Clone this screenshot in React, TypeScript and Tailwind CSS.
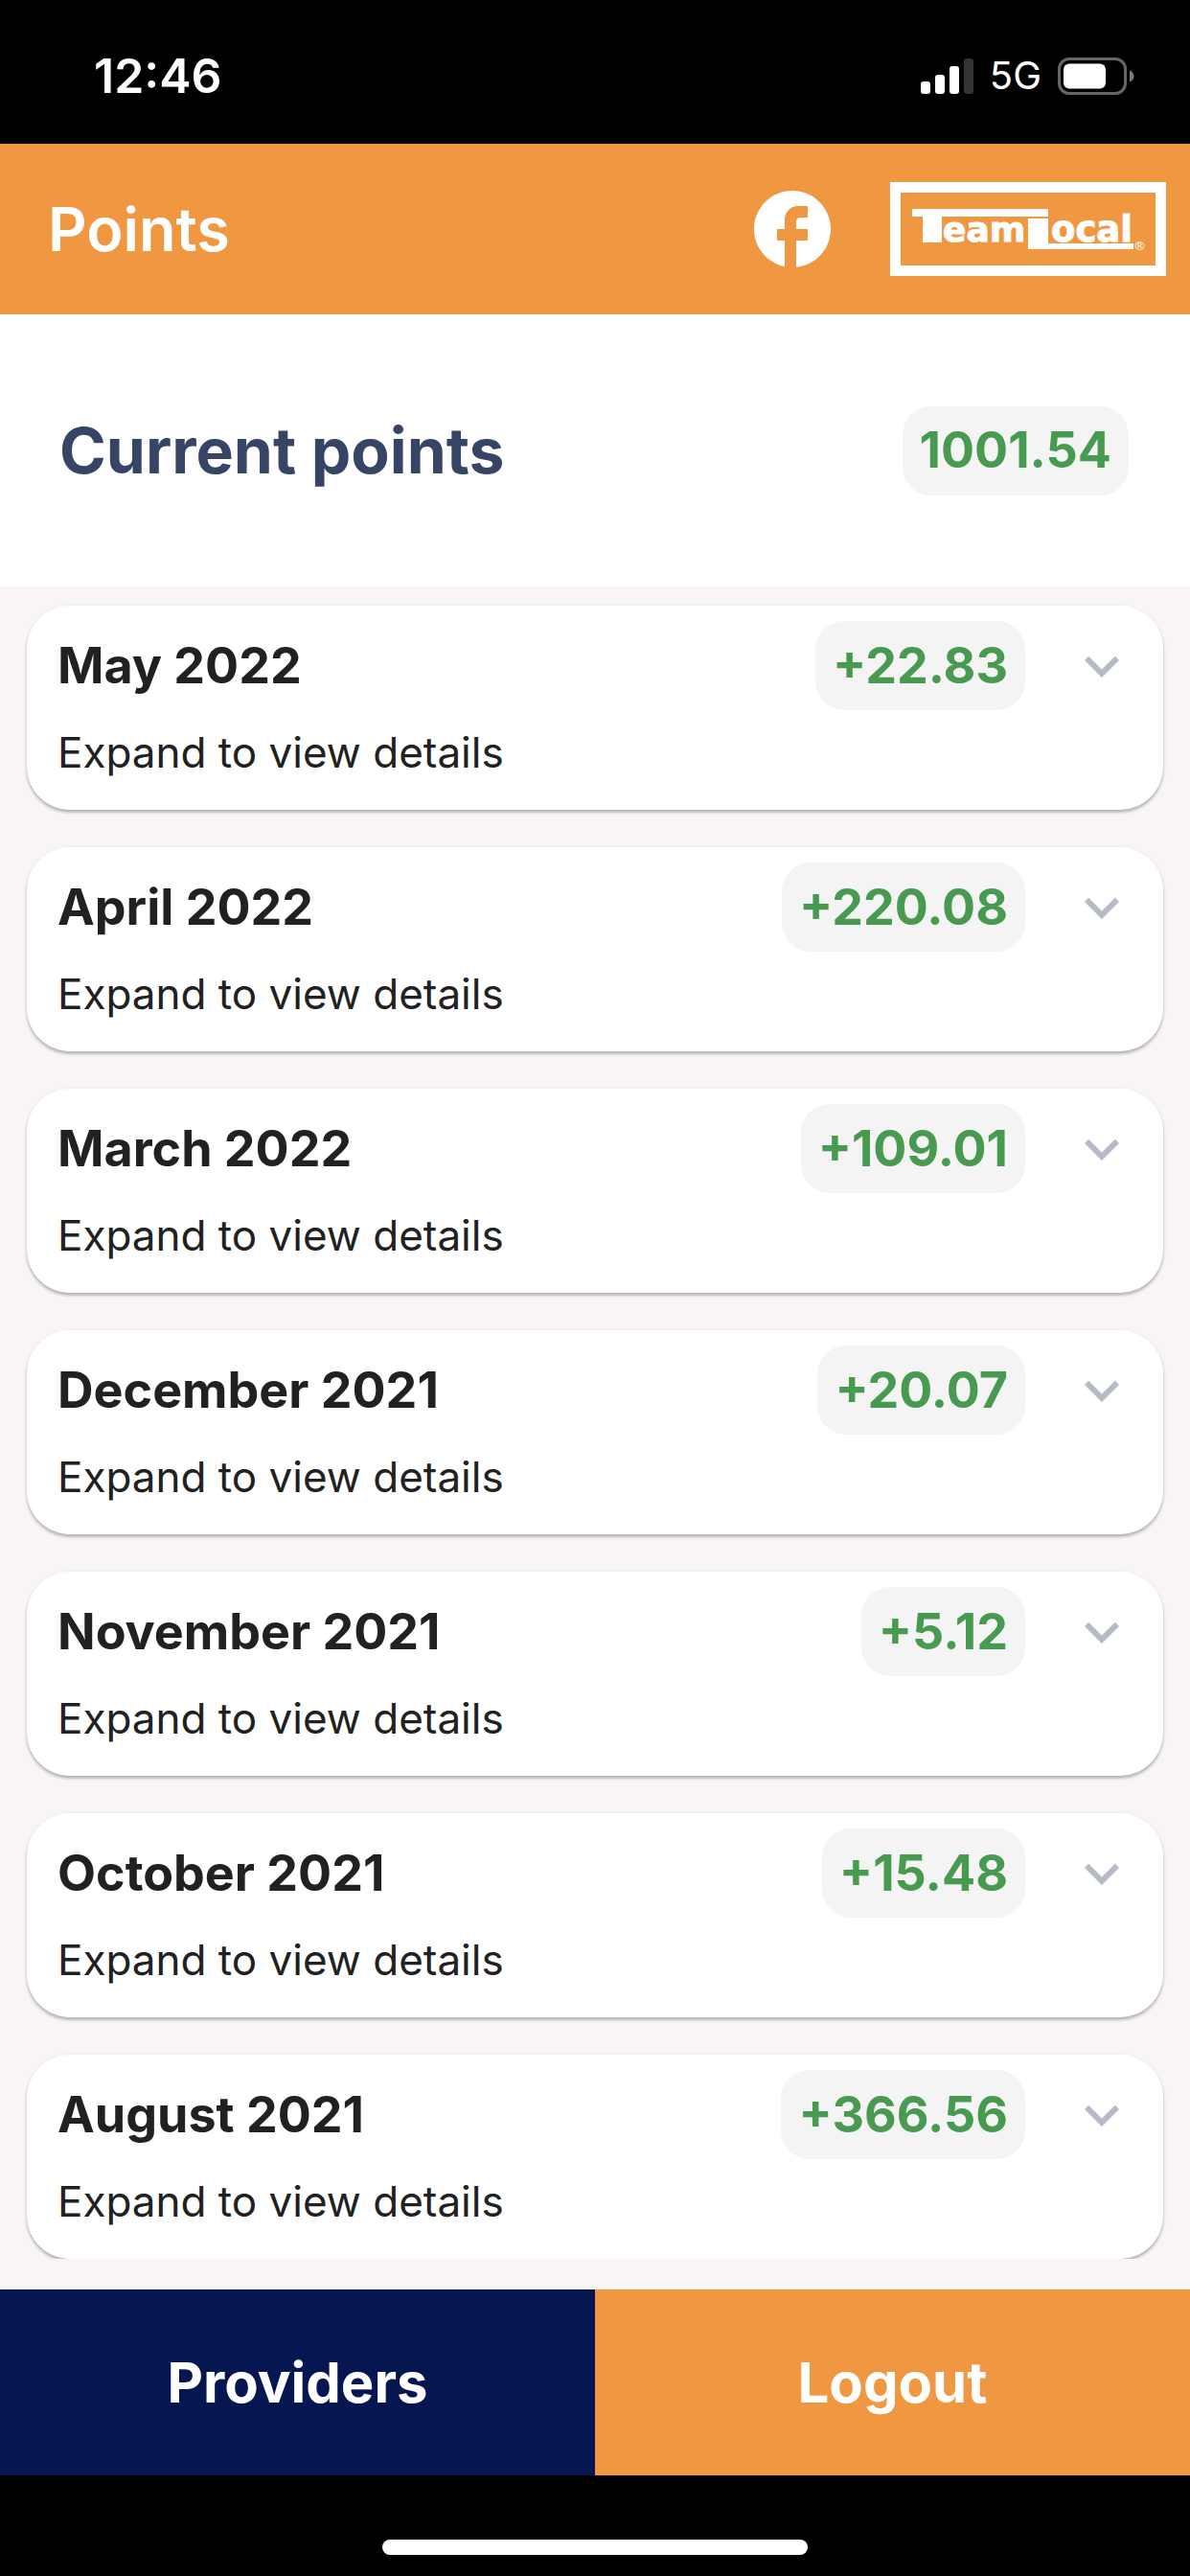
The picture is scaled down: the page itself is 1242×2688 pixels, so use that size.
import { MdExpandMore, MdFacebook } from "react-icons/md";

interface MonthPoints {
  month: string;
  points: string;
}

const months: MonthPoints[] = [
  { month: "May 2022", points: "+22.83" },
  { month: "April 2022", points: "+220.08" },
  { month: "March 2022", points: "+109.01" },
  { month: "December 2021", points: "+20.07" },
  { month: "November 2021", points: "+5.12" },
  { month: "October 2021", points: "+15.48" },
  { month: "August 2021", points: "+366.56" },
];

function SignalIcon() {
  return (
    <svg width="55" height="37" viewBox="0 0 55 37" fill="#fff" aria-hidden="true">
      <rect x="0" y="24" width="10" height="13" rx="3" />
      <rect x="15" y="17" width="10" height="20" rx="3" />
      <rect x="30" y="8" width="10" height="29" rx="3" />
      <rect x="45" y="0" width="10" height="37" rx="3" fill="#333" />
    </svg>
  );
}

function BatteryIcon() {
  return (
    <svg width="80" height="39" viewBox="0 0 80 39" aria-hidden="true">
      <rect x="1.5" y="1.5" width="69" height="36" rx="10.5" fill="none" stroke="#666" strokeWidth="3" />
      <rect x="6" y="6.5" width="44" height="26" rx="6" fill="#fff" />
      <path d="M75 13.5c3 1 4.5 3.5 4.5 6s-1.5 5-4.5 6z" fill="#7a7a7a" />
    </svg>
  );
}

function TeamLocalLogo() {
  return (
    <svg
      width="288"
      height="98"
      viewBox="0 0 288 98"
      fill="#fff"
      fontFamily="'DejaVu Sans', sans-serif"
      fontWeight="700"
      role="img"
      aria-label="TeamLocal"
    >
      <rect x="5.5" y="5.5" width="277" height="87" fill="none" stroke="#fff" strokeWidth="11" />
      <text x="27" y="63" fontSize="48">T</text>
      <rect x="23" y="28" width="142" height="8" />
      <rect x="34" y="28" width="20" height="35" />
      <text x="55" y="62" fontSize="36" stroke="#fff" strokeWidth="1">eam</text>
      <text x="142" y="70" fontSize="42">L</text>
      <rect x="144" y="38" width="21" height="32" />
      <rect x="144" y="64" width="110" height="6" />
      <text x="168" y="62" fontSize="37" stroke="#fff" strokeWidth="1">ocal</text>
      <text x="254" y="71" fontSize="13" fontWeight="400">®</text>
    </svg>
  );
}

function PointsBadge({ value }: { value: string }) {
  return (
    <span className="flex h-[93px] items-center rounded-[30px] bg-[#f4f4f4] px-[18px] text-[52px] font-bold text-[#479a4f]">
      {value}
    </span>
  );
}

function MonthCard({ month, points }: MonthPoints) {
  return (
    <button
      type="button"
      aria-expanded="false"
      className="block w-full rounded-[45px] bg-white pt-4 pr-7 pb-[30px] pl-8 text-left text-[#212121] shadow-[0_3px_3px_rgba(0,0,0,0.22),0_1px_5px_rgba(0,0,0,0.08)]"
    >
      <span className="flex items-center">
        <span className="flex-1 text-[52px] font-bold">{month}</span>
        <PointsBadge value={points} />
        <MdExpandMore className="ml-11 size-[72px] text-[#b5bac6]" />
      </span>
      <span className="mt-3.5 block text-[44px] leading-[60px]">Expand to view details</span>
    </button>
  );
}

export default function App() {
  return (
    <div className="flex min-h-screen flex-col bg-[#f8f5f4] font-['Inter',sans-serif]">
      <div className="flex h-[150px] items-center justify-between bg-black pt-2 pr-[58px] pl-[98px] text-white">
        <span className="text-[50px] font-semibold">12:46</span>
        <div className="flex items-center">
          <SignalIcon />
          <span className="mx-[17px] text-[40px]">5G</span>
          <BatteryIcon />
        </div>
      </div>

      <header className="flex h-[178px] items-center bg-[#f09742] pr-[25px] pl-[50px] text-white">
        <h1 className="flex-1 text-[63px] font-semibold">Points</h1>
        <a href="#facebook" aria-label="Facebook">
          <MdFacebook className="size-24" />
        </a>
        <a href="#home" className="ml-[54px]">
          <TeamLocalLogo />
        </a>
      </header>

      <section className="flex h-[284px] items-center justify-between bg-white pr-16 pl-[62px]">
        <h2 className="text-[66px] font-bold text-[#364465]">Current points</h2>
        <PointsBadge value="1001.54" />
      </section>

      <main className="flex-1 pb-8">
        <ul className="flex flex-col gap-[39px] overflow-hidden px-7 pt-5">
          {months.map((item) => (
            <li key={item.month}>
              <MonthCard {...item} />
            </li>
          ))}
        </ul>
      </main>

      <nav className="grid h-[194px] grid-cols-2 text-[58px] font-bold text-white">
        <button type="button" className="bg-[#051650]">Providers</button>
        <button type="button" className="bg-[#f09742]">Logout</button>
      </nav>

      <div className="flex h-[105px] items-end justify-center bg-black pb-[22px]">
        <div className="h-4 w-[444px] rounded-full bg-white" />
      </div>
    </div>
  );
}
